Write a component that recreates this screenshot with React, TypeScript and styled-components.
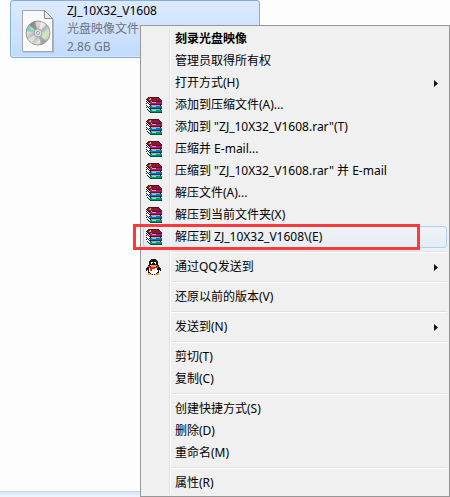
import React from "react";
import styled, { createGlobalStyle, css } from "styled-components";

const GlobalStyle = createGlobalStyle`
  * { box-sizing: border-box; }
  body {
    margin: 0;
    background: #fdfdfd;
    font-family: "Noto Sans", "Noto Sans CJK SC", sans-serif;
    font-size: 12px;
    color: #000;
  }
`;

const Desktop = styled.main`
  position: relative;
  display: flex;
  flex-direction: column;
  justify-content: space-between;
  min-height: 100vh;
`;

const FileTile = styled.section`
  display: flex;
  align-self: flex-start;
  width: 250px;
  height: 58px;
  margin-left: 10px;
  border: 1px solid #84acdd;
  border-radius: 3px;
  background: linear-gradient(#dceafd, #c1dbfc);
  box-shadow: inset 0 0 0 1px #d9e8fb;
`;

const FileIcon = styled.svg`
  flex: none;
  width: 34px;
  height: 44px;
  margin: 8px 0 0 10px;
`;

const FileText = styled.div`
  display: flex;
  flex-direction: column;
  padding: 1px 0 0 12px;
`;

const FileLine = styled.span<{ $muted?: boolean }>`
  height: 18px;
  line-height: 18px;
  white-space: nowrap;
  color: ${(p) => (p.$muted ? "#6d7480" : "#000")};
`;

const DetailsPane = styled.footer`
  height: 6px;
  border-top: 1px solid #c3d5e9;
  background: linear-gradient(#d8e5f4, #f1f5fb);
`;

const Menu = styled.nav`
  position: absolute;
  top: 25px;
  left: 140px;
  right: 0;
  padding: 2px;
  border: 1px solid #979797;
  background: linear-gradient(90deg, transparent 26px, #e2e3e3 26px, #e2e3e3 27px, #fff 27px, #fff 28px, transparent 28px)
    content-box, #f0f0f0;
`;

const Row = styled.button<{ $strong?: boolean; $active?: boolean }>`
  position: relative;
  display: grid;
  grid-template-columns: 31px 1fr 12px;
  align-items: center;
  width: 100%;
  height: 22px;
  padding: 0;
  border: 1px solid transparent;
  border-radius: 3px;
  background: none;
  color: #000;
  font: inherit;
  font-weight: ${(p) => (p.$strong ? 700 : 400)};
  line-height: 18px;
  text-align: left;
  white-space: nowrap;
  ${(p) =>
    p.$active &&
    css`
      border-color: #aecff7;
      background: linear-gradient(rgba(240, 244, 249, 0.6), rgba(220, 234, 248, 0.6));
    `}
`;

const IconSlot = styled.span`
  display: flex;
  padding-left: 2px;
`;

const Pixels = styled.svg`
  width: 16px;
  height: 16px;
`;

const Arrow = styled.svg`
  width: 4px;
  height: 7px;
`;

const Divider = styled.hr`
  height: 2px;
  margin: 3px 0 3px 28px;
  border: 0;
  border-top: 1px solid #e0e0e0;
  background: #fff;
`;

const Marker = styled.span`
  position: absolute;
  inset: -3px 26px -3px -11px;
  border: 3px solid #fc3a3a;
  pointer-events: none;
`;

const palette: Record<string, string> = {
  K: "#151515",
  W: "#ffffff",
  G: "#a8aaa8",
  M: "#8a1638",
  N: "#5a1226",
  Y: "#d0bd32",
  P: "#b21570",
  L: "#f497d0",
  B: "#0874bd",
  C: "#83caf1",
  D: "#003d79",
  E: "#07966c",
  F: "#80e2b7",
  H: "#00553d",
  R: "#ed2024",
  O: "#f4a51c",
};

const books = [
  "..NNNNNNNNNNN...",
  ".NMMYMMMMMMMMN..",
  "KMMYYMMMMMMMMMN.",
  "WKMMMMMMMMMMMMMN",
  "KWKMMYNNNNNNNNNN",
  "WKWKPPLLLLPPPPPP",
  "KWKWPPPPPPPPPPPN",
  "WWWKNNNNNNNNNNNN",
  "KWWWKGGGGGGGGGK.",
  "WKWKBBCCCCBBBBBB",
  "KWKWBBBBBBBBBBBD",
  "WWWKDDDDDDDDDDDD",
  ".KWWKGGGGGGGGGK.",
  "..KWEEFFFFEEEEEE",
  "...KEEEEEEEEEEEH",
  "....HHHHHHHHHHHK",
];

const penguin = [
  ".....KKKKK......",
  "....KKKKKKK.....",
  "...KKKKKKKKK....",
  "...KKWWKWWKK....",
  "...KKWKKKWKK....",
  "...KKKKKKKKK....",
  "..KKOOOOOOOKK...",
  "..RRKOOOOOKRR...",
  ".KKRRRRRRRRRKK..",
  "KKKWRRRRRWWKKKK.",
  "KKKWRRWWWWWKKKK.",
  "K.KWRRWWWWWWK.K.",
  "..KWWWWWWWWWK...",
  "..KKWWWWWWWKK...",
  "..OOKWWWWWKOO...",
  "..OOOOK.KOOOO...",
];

const icons = { books, penguin };

function PixelIcon({ name }: { name: keyof typeof icons }) {
  return (
    <Pixels viewBox="0 0 16 16" shapeRendering="crispEdges" aria-hidden="true">
      {icons[name].flatMap((line, y) =>
        [...line].map((key, x) =>
          palette[key] ? <rect key={`${x}-${y}`} x={x} y={y} width="1" height="1" fill={palette[key]} /> : null
        )
      )}
    </Pixels>
  );
}

function DiscImageIcon() {
  return (
    <FileIcon viewBox="0 0 34 44" aria-hidden="true">
      <defs>
        <linearGradient id="disc" x1="0" y1="0" x2="1" y2="1">
          <stop offset="0" stopColor="#888" />
          <stop offset=".3" stopColor="#ddd" />
          <stop offset=".5" stopColor="#aaa" />
          <stop offset=".7" stopColor="#e5e5e5" />
          <stop offset="1" stopColor="#8e8e8e" />
        </linearGradient>
      </defs>
      <path d="M2 2.5H24L33 11V43.5H2Z" fill="#7f8c9c" opacity=".5" />
      <path d="M1.500 1.500H23.500L31.500 9.500V42.500H1.500Z" fill="#fafafa" stroke="#a3a8ad" />
      <path d="M23.500 1.500V9.500H31.500Z" fill="#e7eaed" stroke="#858b91" />
      <circle cx="17" cy="24" r="12" fill="url(#disc)" stroke="#999" />
      <path d="M17 24 8 16A12 12 0 0 1 14 12.500Z" fill="#777" opacity=".7" />
      <path d="M17 24 20 12.500A12 12 0 0 1 25 16Z" fill="#f4f4f4" opacity=".8" />
      <path d="M17 24 5.500 22A12 12 0 0 1 7 18Z" fill="#63d5cc" opacity=".8" />
      <path d="M17 24 28.500 23A12 12 0 0 1 27 29Z" fill="#c5e8a2" opacity=".7" />
      <path d="M17 24 7 30A12 12 0 0 0 11 34Z" fill="#fff" opacity=".6" />
      <path d="M17 24 20 35.500A12 12 0 0 0 25 32Z" fill="#777" opacity=".5" />
      <circle cx="17" cy="24" r="4" fill="#ddd" stroke="#aaa" />
      <circle cx="17" cy="24" r="1.500" fill="#fff" stroke="#999" />
    </FileIcon>
  );
}

type Item = {
  label: string;
  icon?: keyof typeof icons;
  submenu?: boolean;
  strong?: boolean;
  active?: boolean;
};

const groups: Item[][] = [
  [
    { label: "刻录光盘映像", strong: true },
    { label: "管理员取得所有权" },
    { label: "打开方式(H)", submenu: true },
    { label: "添加到压缩文件(A)...", icon: "books" },
    { label: '添加到 "ZJ_10X32_V1608.rar"(T)', icon: "books" },
    { label: "压缩并 E-mail...", icon: "books" },
    { label: '压缩到 "ZJ_10X32_V1608.rar" 并 E-mail', icon: "books" },
    { label: "解压文件(A)...", icon: "books" },
    { label: "解压到当前文件夹(X)", icon: "books" },
    { label: "解压到 ZJ_10X32_V1608\\(E)", icon: "books", active: true },
  ],
  [{ label: "通过QQ发送到", icon: "penguin", submenu: true }],
  [{ label: "还原以前的版本(V)" }],
  [{ label: "发送到(N)", submenu: true }],
  [{ label: "剪切(T)" }, { label: "复制(C)" }],
  [{ label: "创建快捷方式(S)" }, { label: "删除(D)" }, { label: "重命名(M)" }],
  [{ label: "属性(R)" }],
];

export default function App() {
  return (
    <Desktop lang="zh-CN">
      <GlobalStyle />
      <FileTile>
        <DiscImageIcon />
        <FileText>
          <FileLine>ZJ_10X32_V1608</FileLine>
          <FileLine $muted>光盘映像文件</FileLine>
          <FileLine $muted>2.86 GB</FileLine>
        </FileText>
      </FileTile>
      <DetailsPane />
      <Menu>
        {groups.map((items, index) => (
          <React.Fragment key={index}>
            {index > 0 && <Divider />}
            {items.map((item) => (
              <Row key={item.label} type="button" $strong={item.strong} $active={item.active}>
                <IconSlot>{item.icon && <PixelIcon name={item.icon} />}</IconSlot>
                <span>{item.label}</span>
                {item.submenu && (
                  <Arrow viewBox="0 0 4 7" aria-hidden="true">
                    <path d="M0 0 4 3.500 0 7Z" fill="#111" />
                  </Arrow>
                )}
                {item.active && <Marker />}
              </Row>
            ))}
          </React.Fragment>
        ))}
      </Menu>
    </Desktop>
  );
}
